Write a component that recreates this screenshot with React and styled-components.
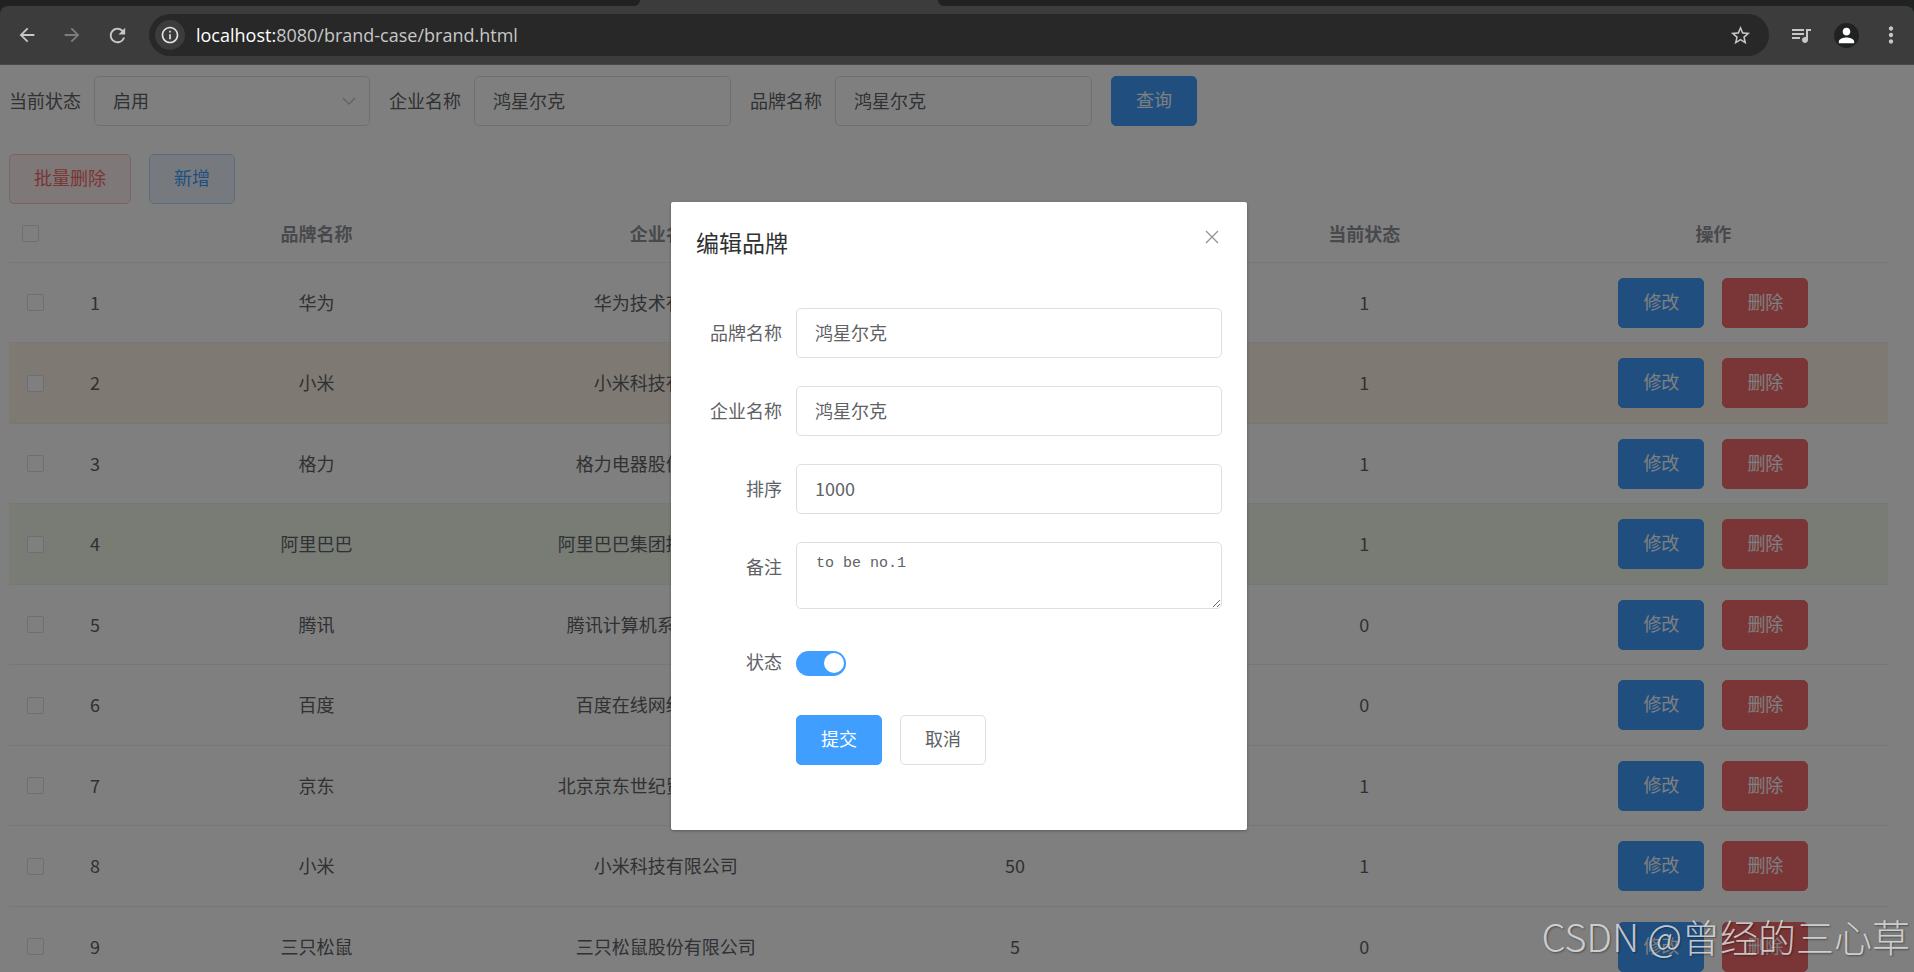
import { useState } from 'react'
import styled, { createGlobalStyle } from 'styled-components'
import {
  MdArrowBack,
  MdArrowForward,
  MdRefresh,
  MdInfoOutline,
  MdStarOutline,
  MdQueueMusic,
  MdPerson,
  MdMoreVert
} from 'react-icons/md'

const GlobalStyle = createGlobalStyle`
  * {
    box-sizing: border-box;
  }
  body {
    margin: 0;
    overflow: hidden;
    background: #fff;
  }
  body, button, input, select {
    font-family: 'Noto Sans CJK SC', sans-serif;
    font-size: 18px;
    line-height: 24px;
    font-weight: 400;
    color: #606266;
  }
`

const Window = styled.div`
  display: flex;
  flex-direction: column;
  height: 100vh;
`

/* browser bar */
const TabStrip = styled.div`
  display: flex;
  height: 6px;
  flex: none;
  background: #3c3c3c;
`

const InactiveTabs = styled.div`
  flex: ${props => props.$grow} 0 0;
  background: #1f2221;
  border-radius: ${props => (props.$left ? '0 0 12px 0' : '0 0 0 12px')};
`

const ActiveTab = styled.div`
  flex: 298 0 0;
`

const BrowserBar = styled.div`
  flex: none;
  background: #1f2221;
`

const Toolbar = styled.div`
  display: flex;
  align-items: center;
  height: 59px;
  padding: 0 8px 0 12px;
  background: #3c3c3c;
  border-bottom: 1px solid #474747;
  border-radius: 8px 8px 0 0;
`

const ToolButton = styled.button`
  display: flex;
  align-items: center;
  justify-content: center;
  flex: none;
  width: 30px;
  height: 30px;
  margin-right: ${props => props.$gap || 0}px;
  padding: 0;
  border: 0;
  border-radius: 50%;
  background: ${props => props.$bg || 'transparent'};
  color: ${props => props.$color || '#c7c7c7'};
`

const AddressBar = styled.div`
  display: flex;
  align-items: center;
  flex: 1;
  height: 42px;
  margin-right: 17px;
  padding: 0 14px 0 6px;
  border-radius: 21px;
  background: #282828;
`

const Url = styled.div`
  flex: 1;
  padding-left: 11px;
  font-family: 'Open Sans', sans-serif;
  font-size: 18px;
  color: #c7c7c7;
  b {
    font-weight: 400;
    color: #fff;
  }
`

const Avatar = styled.button`
  display: flex;
  align-items: flex-end;
  justify-content: center;
  width: 25px;
  height: 25px;
  margin: 0 17px 0 18px;
  padding: 0 0 1px;
  border: 0;
  border-radius: 50%;
  background: #1f2221;
  color: #fff;
`

/* page */
const Page = styled.main`
  position: relative;
  flex: 1;
  min-height: 0;
  overflow: hidden;
  padding: 11px 26px 0 9px;
`

const SearchForm = styled.form`
  display: flex;
  align-items: center;
  gap: 19px;
  margin-bottom: 28px;
`

const Field = styled.div`
  display: flex;
  align-items: center;
  gap: 13px;
  label {
    padding-bottom: 2px;
  }
`

const Input = styled.input`
  width: ${props => props.$width || '100%'};
  height: 50px;
  padding: 0 18px 2px;
  border: 1px solid #dcdfe6;
  border-radius: 5px;
  background: #fff;
  outline: none;
`

const SelectBox = styled.div`
  display: flex;
  position: relative;
  width: 276px;
  svg {
    position: absolute;
    right: 14px;
    top: 18px;
    pointer-events: none;
  }
`

const Select = styled.select`
  width: 100%;
  height: 50px;
  padding: 0 18px 2px;
  border: 1px solid #dcdfe6;
  border-radius: 5px;
  background: #fff;
  appearance: none;
  outline: none;
`

const kinds = {
  plain: ['#fff', '#dcdfe6', '#606266'],
  primary: ['#409eff', '#409eff', '#fff'],
  danger: ['#f56c6c', '#f56c6c', '#fff'],
  primaryPlain: ['#ecf5ff', '#b3d8ff', '#409eff'],
  dangerPlain: ['#fef0f0', '#fbc4c4', '#f56c6c']
}

const Button = styled.button`
  height: 50px;
  padding: 0 24px 4px;
  border: 1px solid ${props => kinds[props.$kind][1]};
  border-radius: 5px;
  background: ${props => kinds[props.$kind][0]};
  color: ${props => kinds[props.$kind][2]};
`

const Buttons = styled.div`
  display: flex;
  justify-content: ${props => (props.$center ? 'center' : 'flex-start')};
  gap: 18px;
`

const Table = styled.table`
  width: 100%;
  margin-top: 1px;
  border-collapse: separate;
  border-spacing: 0;
  table-layout: fixed;
  th {
    height: 58px;
    padding: 0 12px 2px;
    border-bottom: 1px solid #ebeef5;
    color: #909399;
    font-weight: 700;
  }
  td {
    height: 80px;
    padding: 0 12px 2px;
    border-bottom: 1px solid #ebeef5;
    text-align: center;
  }
  th:first-child {
    padding: 0 0 0 13px;
    text-align: left;
  }
  td:first-child {
    padding: 0 0 0 18px;
    text-align: left;
  }
  td:nth-child(2) {
    padding-left: 13px;
    text-align: left;
  }
  td:last-child {
    padding-bottom: 0;
  }
`

const Row = styled.tr`
  background: ${props => props.$bg || '#fff'};
  &:nth-child(even) td {
    height: 81px;
  }
`

const Checkbox = styled.input`
  display: block;
  width: 17px;
  height: 17px;
  margin: 0;
  border: 1px solid #dcdfe6;
  border-radius: 2px;
  background: #fff;
  appearance: none;
`

/* dialog */
const Mask = styled.div`
  position: absolute;
  inset: 0;
  display: flex;
  align-items: flex-start;
  justify-content: center;
  padding: 137px 0 0 4px;
  background: rgba(0, 0, 0, 0.5);
`

const Dialog = styled.div`
  width: 576px;
  padding: 25px 25px 65px;
  border-radius: 2px;
  background: #fff;
  box-shadow: 0 1px 3px rgba(0, 0, 0, 0.3);
`

const DialogHeader = styled.div`
  display: flex;
  justify-content: space-between;
  margin-bottom: 51px;
  h2 {
    margin: 0;
    font-size: 23px;
    line-height: 30px;
    font-weight: 400;
    color: #303133;
  }
`

const CloseButton = styled.button`
  display: flex;
  width: 20px;
  height: 20px;
  padding: 3px;
  border: 0;
  background: none;
`

const DialogForm = styled.form`
  display: grid;
  grid-template-columns: 86px 1fr;
  column-gap: 14px;
  row-gap: 28px;
`

const DialogLabel = styled.label`
  line-height: 48px;
  text-align: right;
`

const Textarea = styled.textarea`
  display: block;
  width: 100%;
  height: 67px;
  padding: 8px 19px;
  border: 1px solid #dcdfe6;
  border-radius: 5px;
  color: #606266;
  font-family: 'Liberation Mono', monospace;
  font-size: 15px;
  line-height: 26px;
  outline: none;
  resize: vertical;
`

const SwitchCell = styled.div`
  display: flex;
  align-items: center;
  height: 50px;
  padding-top: 2px;
`

const Switch = styled.input`
  display: flex;
  align-items: center;
  justify-content: ${props => (props.checked ? 'flex-end' : 'flex-start')};
  width: 50px;
  height: 25px;
  margin: 0;
  padding: 2px;
  border-radius: 13px;
  background: ${props => (props.checked ? '#409eff' : '#dcdfe6')};
  appearance: none;
  &::before {
    content: '';
    width: 20px;
    height: 20px;
    border-radius: 50%;
    background: #fff;
  }
`

const SubmitRow = styled.div`
  grid-column: 2;
`

const Watermark = styled.div`
  position: absolute;
  right: 4px;
  bottom: 8px;
  font-size: 38px;
  font-weight: 300;
  line-height: 56px;
  color: rgba(235, 235, 235, 0.8);
  text-shadow: 1px 1px 2px rgba(0, 0, 0, 0.4);
  pointer-events: none;
`

const brands = [
  { id: 1, brandName: '华为', companyName: '华为技术有限公司', ordered: 100, status: 1 },
  { id: 2, brandName: '小米', companyName: '小米科技有限公司', ordered: 50, status: 1 },
  { id: 3, brandName: '格力', companyName: '格力电器股份有限公司', ordered: 30, status: 1 },
  { id: 4, brandName: '阿里巴巴', companyName: '阿里巴巴集团控股有限公司', ordered: 10, status: 1 },
  { id: 5, brandName: '腾讯', companyName: '腾讯计算机系统有限公司', ordered: 50, status: 0 },
  { id: 6, brandName: '百度', companyName: '百度在线网络技术公司', ordered: 5, status: 0 },
  { id: 7, brandName: '京东', companyName: '北京京东世纪贸易有限公司', ordered: 40, status: 1 },
  { id: 8, brandName: '小米', companyName: '小米科技有限公司', ordered: 50, status: 1 },
  { id: 9, brandName: '三只松鼠', companyName: '三只松鼠股份有限公司', ordered: 5, status: 0 }
]

const rowColors = { 2: '#fdf5e6', 4: '#f0f9eb' }

function Browser () {
  return (
    <BrowserBar>
      <TabStrip>
        <InactiveTabs $grow={640} $left />
        <ActiveTab />
        <InactiveTabs $grow={976} />
      </TabStrip>
      <Toolbar>
        <ToolButton $gap={15} aria-label='back'><MdArrowBack size={22} /></ToolButton>
        <ToolButton $gap={15} $color='#7d7d7d' aria-label='forward'><MdArrowForward size={22} /></ToolButton>
        <ToolButton $gap={17} aria-label='reload'><MdRefresh size={23} /></ToolButton>
        <AddressBar>
          <ToolButton $bg='#3c3c3c' $color='#e3e3e3' aria-label='site info'><MdInfoOutline size={20} /></ToolButton>
          <Url><b>localhost:</b>8080/brand-case/brand.html</Url>
          <ToolButton aria-label='bookmark'><MdStarOutline size={23} /></ToolButton>
        </AddressBar>
        <ToolButton aria-label='media'><MdQueueMusic size={24} /></ToolButton>
        <Avatar aria-label='profile'><MdPerson size={23} /></Avatar>
        <ToolButton aria-label='menu'><MdMoreVert size={26} /></ToolButton>
      </Toolbar>
    </BrowserBar>
  )
}

function SearchBar () {
  const [company, setCompany] = useState('鸿星尔克')
  const [name, setName] = useState('鸿星尔克')

  return (
    <SearchForm onSubmit={e => e.preventDefault()}>
      <Field>
        <label htmlFor='s-status'>当前状态</label>
        <SelectBox>
          <Select id='s-status' defaultValue='1'>
            <option value='1'>启用</option>
            <option value='0'>禁用</option>
          </Select>
          <svg width='14' height='14' viewBox='0 0 14 14' fill='none' stroke='#c0c4cc' strokeWidth='1.3'>
            <path d='M1 4l6 6 6-6' />
          </svg>
        </SelectBox>
      </Field>
      <Field>
        <label htmlFor='s-company'>企业名称</label>
        <Input id='s-company' $width='257px' value={company} onChange={e => setCompany(e.target.value)} />
      </Field>
      <Field>
        <label htmlFor='s-name'>品牌名称</label>
        <Input id='s-name' $width='257px' value={name} onChange={e => setName(e.target.value)} />
      </Field>
      <Button $kind='primary'>查询</Button>
    </SearchForm>
  )
}

function BrandTable () {
  return (
    <Table>
      <colgroup>
        <col style={{ width: 68 }} />
        <col style={{ width: 65 }} />
      </colgroup>
      <thead>
        <tr>
          <th><Checkbox type='checkbox' aria-label='全选' /></th>
          <th></th>
          <th>品牌名称</th>
          <th>企业名称</th>
          <th>排序</th>
          <th>当前状态</th>
          <th>操作</th>
        </tr>
      </thead>
      <tbody>
        {brands.map(brand => (
          <Row key={brand.id} $bg={rowColors[brand.id]}>
            <td><Checkbox type='checkbox' aria-label={brand.brandName} /></td>
            <td>{brand.id}</td>
            <td>{brand.brandName}</td>
            <td>{brand.companyName}</td>
            <td>{brand.ordered}</td>
            <td>{brand.status}</td>
            <td>
              <Buttons $center>
                <Button $kind='primary'>修改</Button>
                <Button $kind='danger'>删除</Button>
              </Buttons>
            </td>
          </Row>
        ))}
      </tbody>
    </Table>
  )
}

function EditDialog () {
  const [brand, setBrand] = useState({
    brandName: '鸿星尔克',
    companyName: '鸿星尔克',
    ordered: '1000',
    description: 'to be no.1',
    status: true
  })

  const change = key => e => setBrand({ ...brand, [key]: e.target.value })

  return (
    <Mask>
      <Dialog role='dialog' aria-labelledby='dialog-title'>
        <DialogHeader>
          <h2 id='dialog-title'>编辑品牌</h2>
          <CloseButton aria-label='close'>
            <svg width='14' height='14' viewBox='0 0 14 14' stroke='#909399' strokeWidth='1.3'>
              <path d='M1 1l12 12M13 1L1 13' />
            </svg>
          </CloseButton>
        </DialogHeader>
        <DialogForm onSubmit={e => e.preventDefault()}>
          <DialogLabel htmlFor='brandName'>品牌名称</DialogLabel>
          <Input id='brandName' value={brand.brandName} onChange={change('brandName')} />
          <DialogLabel htmlFor='companyName'>企业名称</DialogLabel>
          <Input id='companyName' value={brand.companyName} onChange={change('companyName')} />
          <DialogLabel htmlFor='ordered'>排序</DialogLabel>
          <Input id='ordered' value={brand.ordered} onChange={change('ordered')} />
          <DialogLabel htmlFor='description'>备注</DialogLabel>
          <Textarea id='description' value={brand.description} onChange={change('description')} />
          <DialogLabel htmlFor='status'>状态</DialogLabel>
          <SwitchCell>
            <Switch
              id='status'
              type='checkbox'
              role='switch'
              checked={brand.status}
              onChange={e => setBrand({ ...brand, status: e.target.checked })}
            />
          </SwitchCell>
          <SubmitRow>
            <Buttons>
              <Button $kind='primary'>提交</Button>
              <Button $kind='plain' type='button'>取消</Button>
            </Buttons>
          </SubmitRow>
        </DialogForm>
      </Dialog>
    </Mask>
  )
}

function App () {
  return (
    <Window>
      <GlobalStyle />
      <Browser />
      <Page>
        <SearchBar />
        <Buttons>
          <Button $kind='dangerPlain'>批量删除</Button>
          <Button $kind='primaryPlain'>新增</Button>
        </Buttons>
        <BrandTable />
        <EditDialog />
        <Watermark>CSDN @曾经的三心草</Watermark>
      </Page>
    </Window>
  )
}

export default App
